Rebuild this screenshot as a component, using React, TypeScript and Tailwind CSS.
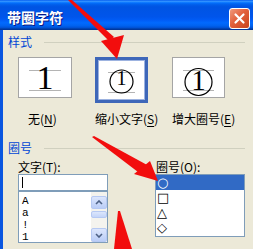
import React from "react";

function Digit({ size, className }: { size: number; className?: string }) {
  return (
    <span
      className={
        "absolute inset-0 flex items-center justify-center font-['Liberation_Serif',serif] leading-none text-black " +
        (className ?? "")
      }
    >
      <span className={size === 34 ? "text-[34px]" : size === 20 ? "text-[20px]" : "text-[29px]"}>1</span>
    </span>
  );
}

function BoxLines({ w, circle }: { w: number; circle?: { cx: number; cy: number; r: number } }) {
  return (
    <svg className="absolute inset-0" width="100%" height="100%">
      <line x1={10} y1={12.5} x2={w - 10} y2={12.5} stroke="#B4B4B4" strokeWidth={1} />
      <line x1={10} y1={32.5} x2={w - 10} y2={32.5} stroke="#B4B4B4" strokeWidth={1} />
      {circle && (
        <circle cx={circle.cx} cy={circle.cy} r={circle.r} fill="none" stroke="#000" strokeWidth={1.2} />
      )}
    </svg>
  );
}

function Under({ c }: { c: string }) {
  return <span className="underline underline-offset-2">{c}</span>;
}

export default function App() {
  return (
    <div className="relative w-[253px] h-[249px] overflow-hidden bg-[#ECE9D8] font-['Noto_Sans_CJK_SC',sans-serif]">
      {/* Title bar */}
      <div className="h-[30px] pt-[4px] pl-[7px] pr-[3px] flex items-center justify-between bg-[linear-gradient(to_bottom,#0058EE_0%,#3593FF_4%,#288EFF_6%,#127DFF_8%,#036FFC_10%,#0262EE_14%,#0057E5_20%,#0054E3_24%,#0055EB_56%,#005BF5_66%,#026AFE_76%,#0062EF_86%,#0052D6_92%,#0040AB_96%,#003092_100%)]">
        <span className="text-white text-[14px] font-bold leading-none [text-shadow:1px_1px_0_#0A1883]">
          带圈字符
        </span>
        <div className="mt-[2px] w-[21px] h-[21px] rounded-[3px] border border-white bg-[linear-gradient(135deg,#F09A7E_0%,#E2603C_45%,#C8431C_100%)] flex items-center justify-center">
          <svg width="13" height="13" viewBox="0 0 13 13">
            <line x1="2.5" y1="2.5" x2="10.5" y2="10.5" stroke="#fff" strokeWidth="2.2" strokeLinecap="round" />
            <line x1="10.5" y1="2.5" x2="2.5" y2="10.5" stroke="#fff" strokeWidth="2.2" strokeLinecap="round" />
          </svg>
        </div>
      </div>

      {/* Body */}
      <div className="flex h-[219px]">
        <div className="w-[3px] bg-[#0A56E0]" />
        <div className="flex-1 flex flex-col">
          {/* Group 样式 */}
          <div className="mt-[5px] h-[14px] flex items-center pl-[5px] pr-[8px]">
            <span className="text-[12px] leading-[14px] text-[#0046D5]">样式</span>
            <div className="ml-[12px] flex-1 h-px bg-[#D0D0BF]" />
          </div>

          <div className="mt-[8px] flex pl-[15px]">
            {/* col 1 */}
            <div className="w-[54px] flex flex-col">
              <div className="h-[55px]">
                <div className="relative w-[54px] h-[41px] bg-white border border-[#A5A5A5]">
                  <BoxLines w={52} />
                  <Digit size={34} />
                </div>
              </div>
              <div className="h-[14px] pl-[10px] text-[12px] leading-[14px] text-black whitespace-nowrap">
                无(<Under c="N" />)
              </div>
            </div>
            {/* col 2 */}
            <div className="ml-[23px] w-[53px] flex flex-col">
              <div className="h-[55px]">
                <div className="relative w-[53px] h-[46px] bg-white border-[3px] border-[#3E67B9] outline outline-1 outline-[#9DB3E0] -outline-offset-4">
                  <BoxLines w={47} circle={{ cx: 23.5, cy: 21.5, r: 11.5 }} />
                  <Digit size={20} className="pb-[4px]" />
                </div>
              </div>
              <div className="h-[14px] text-[12px] leading-[14px] text-black whitespace-nowrap">
                缩小文字(<Under c="S" />)
              </div>
            </div>
            {/* col 3 */}
            <div className="ml-[24px] w-[53px] flex flex-col">
              <div className="h-[55px]">
                <div className="relative w-[53px] h-[41px] bg-white border border-[#A5A5A5]">
                  <BoxLines w={51} circle={{ cx: 25.5, cy: 24, r: 13.5 }} />
                  <Digit size={29} className="pt-[5px]" />
                </div>
              </div>
              <div className="h-[14px] text-[12px] leading-[14px] text-black whitespace-nowrap">
                增大圈号(<Under c="E" />)
              </div>
            </div>
          </div>

          {/* Group 圈号 */}
          <div className="mt-[15px] h-[14px] flex items-center pl-[5px] pr-[8px]">
            <span className="text-[12px] leading-[14px] text-[#0046D5]">圈号</span>
            <div className="ml-[12px] flex-1 h-px bg-[#D0D0BF]" />
          </div>

          <div className="mt-[5px] flex pl-[15px]">
            {/* left column */}
            <div className="w-[90px] flex flex-col">
              <div className="h-[14px] text-[12px] leading-[14px] text-black whitespace-nowrap">
                文字(<Under c="T" />):
              </div>
              <div className="h-[17px] bg-white border border-[#7F9DB9] flex items-center">
                <div className="ml-[3px] w-px h-[11px] bg-black" />
              </div>
              <div className="h-[52px] bg-white border border-[#7F9DB9] flex">
                <div className="flex-1 pl-[3px] pt-[3px] font-['Liberation_Mono',monospace] text-[11px] text-black">
                  <div className="h-[12px] leading-[12px]">A</div>
                  <div className="h-[12px] leading-[12px]">a</div>
                  <div className="h-[12px] leading-[12px]">!</div>
                  <div className="h-[12px] leading-[12px]">1</div>
                </div>
                <div className="w-[16px] bg-[#F4F3EE] flex flex-col pt-[4px]">
                  <div className="h-[13px] rounded-[2px] border border-[#B6C9F3] bg-[linear-gradient(to_bottom,#DCE6FC,#BACDF7)] flex items-center justify-center">
                    <svg width="8" height="5" viewBox="0 0 8 5">
                      <polyline points="1,4 4,1 7,4" fill="none" stroke="#4D6185" strokeWidth="1.6" />
                    </svg>
                  </div>
                  <div className="mt-[2px] h-[7px] rounded-[2px] border border-[#B6C9F3] bg-[linear-gradient(to_bottom,#DCE6FC,#C4D5F9)]" />
                  <div className="flex-1" />
                  <div className="h-[14px] rounded-[2px] border border-[#B6C9F3] bg-[linear-gradient(to_bottom,#DCE6FC,#BACDF7)] flex items-center justify-center">
                    <svg width="8" height="5" viewBox="0 0 8 5">
                      <polyline points="1,1 4,4 7,1" fill="none" stroke="#4D6185" strokeWidth="1.6" />
                    </svg>
                  </div>
                </div>
              </div>
            </div>

            {/* right column */}
            <div className="ml-[47px] w-[90px] flex flex-col">
              <div className="h-[14px] pl-[1px] text-[12px] leading-[14px] text-black whitespace-nowrap">
                圈号(<Under c="O" />):
              </div>
              <div className="h-[63px] bg-white border border-[#7F9DB9] flex flex-col font-['DejaVu_Sans',sans-serif] text-[13px]">
                <div className="h-[15px] leading-[15px] bg-[#316AC5] text-white pl-[1px]">○</div>
                <div className="h-[15px] leading-[15px] text-black pl-[1px]">□</div>
                <div className="h-[15px] leading-[15px] text-black pl-[1px]">△</div>
                <div className="h-[15px] leading-[15px] text-black pl-[1px]">◇</div>
              </div>
            </div>
          </div>
        </div>
      </div>

      {/* Red annotation arrows */}
      <svg className="absolute left-0 top-0 pointer-events-none" width="253" height="249" viewBox="0 0 253 249">
        <polygon points="68,0 72,0 114,37 109,41" fill="#F20D0D" />
        <polygon points="101,41 124,35 117,59" fill="#F20D0D" />
        <polygon points="92,137 94,136 149,166 138,172" fill="#F20D0D" />
        <polygon points="134,174 150,161 158,181" fill="#F20D0D" />
        <polygon points="118,211 120,211 132,249 114,249" fill="#F20D0D" />
      </svg>
    </div>
  );
}
